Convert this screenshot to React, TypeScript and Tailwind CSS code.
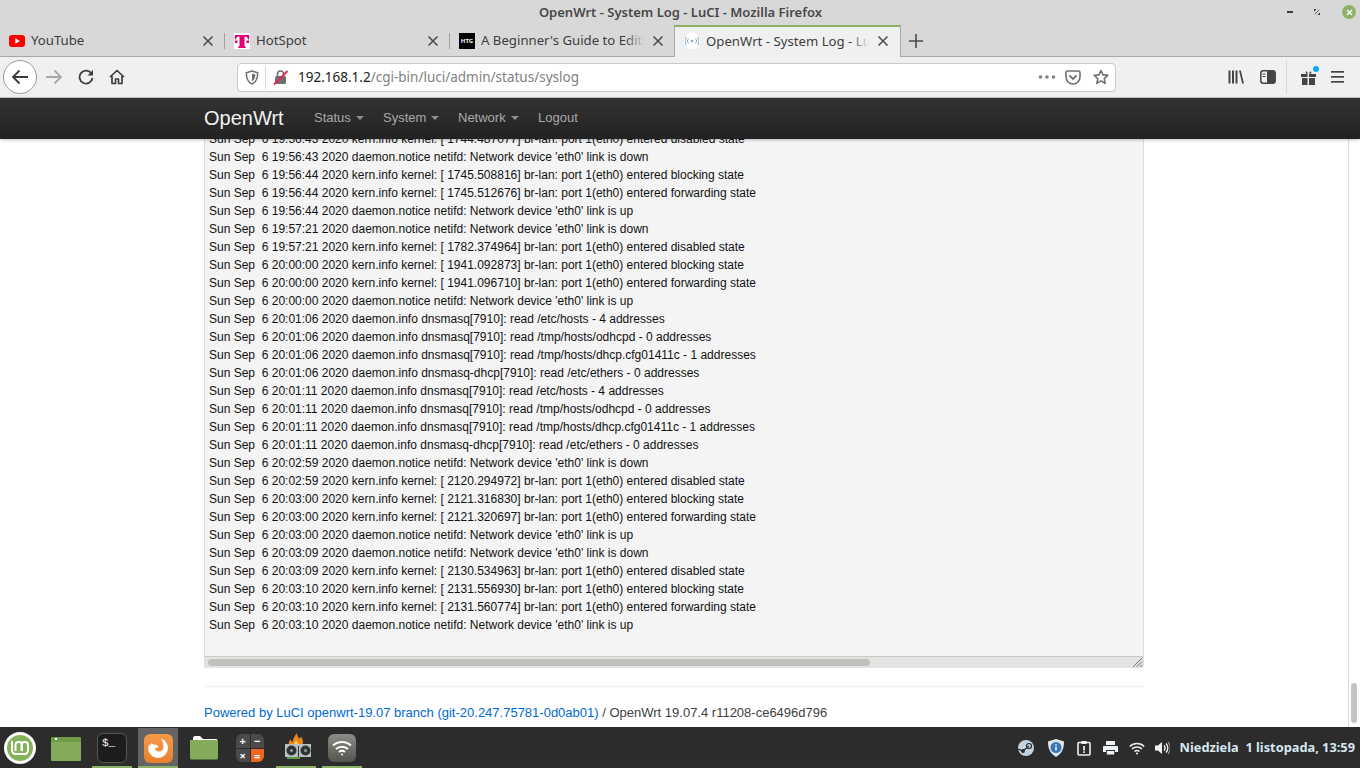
import React from "react";

const S = "Sun Sep  6 ";
const logs = [
  "19:56:43 2020 kern.info kernel: [ 1744.487077] br-lan: port 1(eth0) entered disabled state",
  "19:56:43 2020 daemon.notice netifd: Network device 'eth0' link is down",
  "19:56:44 2020 kern.info kernel: [ 1745.508816] br-lan: port 1(eth0) entered blocking state",
  "19:56:44 2020 kern.info kernel: [ 1745.512676] br-lan: port 1(eth0) entered forwarding state",
  "19:56:44 2020 daemon.notice netifd: Network device 'eth0' link is up",
  "19:57:21 2020 daemon.notice netifd: Network device 'eth0' link is down",
  "19:57:21 2020 kern.info kernel: [ 1782.374964] br-lan: port 1(eth0) entered disabled state",
  "20:00:00 2020 kern.info kernel: [ 1941.092873] br-lan: port 1(eth0) entered blocking state",
  "20:00:00 2020 kern.info kernel: [ 1941.096710] br-lan: port 1(eth0) entered forwarding state",
  "20:00:00 2020 daemon.notice netifd: Network device 'eth0' link is up",
  "20:01:06 2020 daemon.info dnsmasq[7910]: read /etc/hosts - 4 addresses",
  "20:01:06 2020 daemon.info dnsmasq[7910]: read /tmp/hosts/odhcpd - 0 addresses",
  "20:01:06 2020 daemon.info dnsmasq[7910]: read /tmp/hosts/dhcp.cfg01411c - 1 addresses",
  "20:01:06 2020 daemon.info dnsmasq-dhcp[7910]: read /etc/ethers - 0 addresses",
  "20:01:11 2020 daemon.info dnsmasq[7910]: read /etc/hosts - 4 addresses",
  "20:01:11 2020 daemon.info dnsmasq[7910]: read /tmp/hosts/odhcpd - 0 addresses",
  "20:01:11 2020 daemon.info dnsmasq[7910]: read /tmp/hosts/dhcp.cfg01411c - 1 addresses",
  "20:01:11 2020 daemon.info dnsmasq-dhcp[7910]: read /etc/ethers - 0 addresses",
  "20:02:59 2020 daemon.notice netifd: Network device 'eth0' link is down",
  "20:02:59 2020 kern.info kernel: [ 2120.294972] br-lan: port 1(eth0) entered disabled state",
  "20:03:00 2020 kern.info kernel: [ 2121.316830] br-lan: port 1(eth0) entered blocking state",
  "20:03:00 2020 kern.info kernel: [ 2121.320697] br-lan: port 1(eth0) entered forwarding state",
  "20:03:00 2020 daemon.notice netifd: Network device 'eth0' link is up",
  "20:03:09 2020 daemon.notice netifd: Network device 'eth0' link is down",
  "20:03:09 2020 kern.info kernel: [ 2130.534963] br-lan: port 1(eth0) entered disabled state",
  "20:03:10 2020 kern.info kernel: [ 2131.556930] br-lan: port 1(eth0) entered blocking state",
  "20:03:10 2020 kern.info kernel: [ 2131.560774] br-lan: port 1(eth0) entered forwarding state",
  "20:03:10 2020 daemon.notice netifd: Network device 'eth0' link is up",
];

function CloseX() {
  return (
    <svg width="12" height="12" viewBox="0 0 12 12" className="shrink-0">
      <path d="M1.500 1.500l9 9M10.500 1.500l-9 9" stroke="#4a4a4a" strokeWidth="1.500" fill="none" />
    </svg>
  );
}

function Tab({ icon, label, active }: { icon: React.ReactNode; label: string; active?: boolean }) {
  return (
    <div
      className={
        active
          ? "relative -mb-px -ml-px flex h-[32px] w-[227px] items-center border-x border-t-2 border-[#a8a8a8] border-t-[#8bb267] bg-[#f0f0f0] pb-[2px] pl-[9px] pr-[11px]"
          : "flex h-[31px] w-[225px] items-center pl-[9px] pr-[11px]"
      }
    >
      <div className="flex h-[16px] w-[16px] shrink-0 items-center justify-center">{icon}</div>
      <div className="relative ml-[6px] mr-[7px] mt-[1px] flex-1 overflow-hidden whitespace-nowrap text-[13.200px] text-[#3d3d3d]">
        {label}
        <div className={"absolute inset-y-0 right-0 w-[20px] bg-gradient-to-r from-transparent " + (active ? "to-[#f0f0f0]" : "to-[#d8d8d8]")} />
      </div>
      <CloseX />
    </div>
  );
}

const Sep = () => <div className="-ml-px h-[16px] w-px shrink-0 bg-[#a0a0a0]" />;

function Caret() {
  return <span className="ml-[5px] inline-block h-0 w-0 border-x-[4px] border-t-[4px] border-x-transparent border-t-[#8f8f8f] align-middle" />;
}

function NavItem({ label, caret, cls }: { label: string; caret?: boolean; cls: string }) {
  return (
    <div className={"text-[13px] text-[#a9a9a9] " + cls}>
      {label}
      {caret && <Caret />}
    </div>
  );
}

function Dock({ children, running, active }: { children: React.ReactNode; running?: boolean; active?: boolean }) {
  return (
    <div className={"relative flex h-[40px] w-[40px] items-center justify-center " + (active ? "bg-[#646464]" : "")}>
      {children}
      {running && <div className="absolute inset-x-0 bottom-0 h-[2px] bg-[#8bb267]" />}
    </div>
  );
}

export default function App() {
  return (
    <div className="flex h-[768px] w-[1360px] flex-col overflow-hidden bg-white font-['Noto_Sans',sans-serif]">
      {/* title bar + tabs */}
      <div className="flex h-[57px] shrink-0 flex-col border-b border-[#a8a8a8] bg-[#d8d8d8]">
        <div className="relative flex h-[25px] items-center justify-center text-[13px] font-semibold text-[#484848]">
          <span className="ml-[1px]">OpenWrt - System Log - LuCI - Mozilla Firefox</span>
          <div className="absolute right-[4px] top-[5px] flex items-center gap-[16px]">
            <div className="mr-[5px] h-[2px] w-[6px] bg-[#3a3a3a]" />
            <svg width="6" height="6" viewBox="0 0 8 8" className="mr-[6px]">
              <path d="M0 3.500V0h3.500zM8 4.500V8H4.500z" fill="#3a3a3a" />
              <path d="M1 7L7 1" stroke="#3a3a3a" strokeWidth="1" />
            </svg>
            <div className="flex h-[14px] w-[14px] items-center justify-center rounded-full bg-[#8fb26a]">
              <svg width="7" height="7" viewBox="0 0 7 7"><path d="M1 1l5 5M6 1l-5 5" stroke="#fff" strokeWidth="1.400" /></svg>
            </div>
          </div>
        </div>
        <div className="flex h-[31px] items-center">
          <Tab
            label="YouTube"
            icon={
              <svg width="16" height="12" viewBox="0 0 16 12">
                <rect width="16" height="12" rx="3" fill="#f00" />
                <path d="M6.300 3.300v5.400L11 6z" fill="#fff" />
              </svg>
            }
          />
          <Sep />
          <Tab
            label="HotSpot"
            icon={
              <svg width="16" height="16" viewBox="0 0 16 16">
                <rect width="16" height="16" fill="#fff" />
                <path d="M5.500 2h5v.8c0 0 0 0 0 0v10c0 .5.500.7 1.200.7V15H4.300v-1.500c.7 0 1.200-.2 1.200-.7z" fill="#e20074" />
                <path d="M0.800 2h14.400v4.500h-1.300c0-1.800-1-3-3.400-3H5.500c-2.400 0-3.400 1.200-3.400 3H.8z" fill="#e20074" />
                <rect x="1" y="7.500" width="2.500" height="2.500" fill="#e20074" />
                <rect x="12.500" y="7.500" width="2.500" height="2.500" fill="#e20074" />
              </svg>
            }
          />
          <Sep />
          <Tab
            label="A Beginner's Guide to Editing"
            icon={
              <div className="flex h-[16px] w-[16px] items-center justify-center bg-black text-[6px] font-bold leading-none text-white">HTG</div>
            }
          />
          <Tab
            active
            label="OpenWrt - System Log - LuCI"
            icon={
              <div className="flex h-[16px] w-[16px] items-center justify-center rounded-full bg-white">
                <svg width="14" height="10" viewBox="0 0 14 10" fill="none" stroke="#7da7c4" strokeWidth="1">
                  <path d="M3.500 2.500a3.500 3.500 0 0 0 0 5M1.500 1a6 6 0 0 0 0 8M10.500 2.500a3.500 3.500 0 0 1 0 5M12.500 1a6 6 0 0 1 0 8" />
                  <circle cx="7" cy="5" r="1.200" fill="#7da7c4" stroke="none" />
                </svg>
              </div>
            }
          />
          <svg width="16" height="16" viewBox="0 0 16 16" className="ml-[7px]">
            <path d="M8 1v14M1 8h14" stroke="#4a4a4a" strokeWidth="1.600" />
          </svg>
        </div>
      </div>

      {/* toolbar */}
      <div className="flex h-[41px] shrink-0 items-center border-b border-[#c8c8c8] bg-[#f0f0f0]">
        <div className="ml-[3px] flex h-[34px] w-[34px] items-center justify-center rounded-full border border-[#9a9a9a] bg-white">
          <svg width="18" height="16" viewBox="0 0 18 16" fill="none" stroke="#3c3c3c" strokeWidth="1.800">
            <path d="M17 8H2M8.500 1.500L2 8l6.500 6.500" />
          </svg>
        </div>
        <svg width="18" height="16" viewBox="0 0 18 16" fill="none" stroke="#a8a8a8" strokeWidth="1.800" className="ml-[8px]">
          <path d="M1 8h15M9.500 1.500L16 8l-6.500 6.500" />
        </svg>
        <svg width="16" height="16" viewBox="0 0 16 16" fill="none" className="ml-[15px]">
          <path d="M13.500 4.500A6.500 6.500 0 1 0 14.500 9" stroke="#3c3c3c" strokeWidth="1.800" />
          <path d="M15 1v5.500H9.500z" fill="#3c3c3c" />
        </svg>
        <svg width="16" height="16" viewBox="0 0 16 16" fill="none" className="ml-[15px]">
          <path d="M1 8l7-6.500L15 8M3 7v7.500h3.500V10h3v4.500H13V7" stroke="#3c3c3c" strokeWidth="1.700" strokeLinejoin="round" />
        </svg>
        <div className="ml-[112px] flex h-[29px] w-[879px] items-center rounded-[4px] border border-[#c8c8c8] bg-white">
          <svg width="14" height="15" viewBox="0 0 14 15" className="ml-[7px]" fill="none">
            <path d="M7 1l5.700 1.700c0 6-1.500 9.500-5.700 11.300C2.800 12.200 1.300 8.700 1.300 2.700z" stroke="#707070" strokeWidth="1.500" />
            <path d="M7 3.500l3.300 1c0 3.500-1 5.500-3.300 6.700z" fill="#707070" />
          </svg>
          <div className="ml-[6px] h-[24px] w-px bg-[#d8d8d8]" />
          <svg width="16" height="16" viewBox="0 0 16 16" className="ml-[7px]" fill="none">
            <rect x="2" y="7" width="11" height="8" rx="1.500" fill="#6e6e6e" />
            <path d="M4.500 7V5a3 3 0 0 1 6 0v2" stroke="#6e6e6e" strokeWidth="1.500" />
            <path d="M1 15.500L14.500 2" stroke="#e22850" strokeWidth="2" />
          </svg>
          <div className="ml-[9px] flex-1 whitespace-nowrap text-[13.500px] text-[#1c1c1c]">
            192.168.1.2<span className="text-[#808080]">/cgi-bin/luci/admin/status/syslog</span>
          </div>
          <svg width="18" height="4" viewBox="0 0 18 4" fill="#808080"><circle cx="2.500" cy="2" r="1.800" /><circle cx="9" cy="2" r="1.800" /><circle cx="15.500" cy="2" r="1.800" /></svg>
          <svg width="16" height="15" viewBox="0 0 16 15" fill="none" className="ml-[9px]">
            <path d="M2.500 1h11A1.500 1.500 0 0 1 15 2.500V7a7 7 0 0 1-14 0V2.500A1.500 1.500 0 0 1 2.500 1z" stroke="#707070" strokeWidth="1.600" />
            <path d="M4.500 5.500L8 9l3.500-3.500" stroke="#707070" strokeWidth="1.800" />
          </svg>
          <svg width="16" height="16" viewBox="0 0 16 16" fill="none" className="ml-[12px] mr-[6px]">
            <path d="M8 1.500l2 4.400 4.800.5-3.600 3.200 1 4.700L8 11.900l-4.200 2.400 1-4.700L1.200 6.400 6 5.900z" stroke="#707070" strokeWidth="1.600" strokeLinejoin="round" />
          </svg>
        </div>
        <svg width="16" height="14" viewBox="0 0 16 14" className="ml-[112px]" fill="#444">
          <rect x="0.500" y="0.500" width="2" height="13" /><rect x="4" y="0.500" width="2" height="13" /><rect x="7.500" y="0.500" width="2" height="13" />
          <path d="M11 0.500h1.800L16 13.500h-1.800z" />
        </svg>
        <svg width="16" height="14" viewBox="0 0 16 14" className="ml-[16px]" fill="none">
          <rect x="0.800" y="0.800" width="14.400" height="12.400" rx="2.500" stroke="#444" strokeWidth="1.500" />
          <rect x="7" y="1" width="8" height="12" rx="1" fill="#444" />
          <path d="M2.500 4h3M2.500 6.500h3" stroke="#444" />
        </svg>
        <div className="ml-[10px] h-[34px] w-px bg-[#d8d8d8]" />
        <div className="relative ml-[14px] h-[16px] w-[15px]">
          <svg width="15" height="14" viewBox="0 0 15 14" className="absolute left-0 top-[2px]" fill="#444">
            <path d="M0 3h6.500v3H0zM8 3h7v3H8zM1 7h5.500v7H1zM8 7h6v7H8zM5 0l2.500 2.500L10 0l.5 2.500h-6z" />
          </svg>
          <div className="absolute -right-[3px] -top-[3px] h-[6px] w-[6px] rounded-full bg-[#12a6f5]" />
        </div>
        <svg width="13" height="12" viewBox="0 0 13 12" className="ml-[15px]" fill="#444">
          <rect y="0" width="13" height="1.700" /><rect y="5" width="13" height="1.700" /><rect y="10" width="13" height="1.700" />
        </svg>
      </div>

      {/* navbar */}
      <div className="relative z-10 flex h-[41px] shrink-0 bg-gradient-to-b from-[#333333] to-[#222222] font-['Liberation_Sans',sans-serif] shadow-[0_1px_3px_rgba(0,0,0,0.25)]">
        <div className="flex w-[1348px] justify-center">
          <div className="flex w-[940px] items-center pb-[2px]">
            <div className="w-[110px] text-[20px] leading-[24px] text-[#f2f2f2]">OpenWrt</div>
            <NavItem label="Status" caret cls="w-[69px]" />
            <NavItem label="System" caret cls="w-[75px]" />
            <NavItem label="Network" caret cls="w-[80px]" />
            <NavItem label="Logout" cls="" />
          </div>
        </div>
      </div>

      {/* page */}
      <div className="flex min-h-0 flex-1 overflow-hidden font-['Liberation_Sans',sans-serif]">
        <div className="flex min-w-0 flex-1 justify-center">
          <div className="flex w-[940px] flex-col">
            <div className="-mt-[9px] flex h-[538px] shrink-0 flex-col rounded-b-[3px] border-x border-[#dcdcdc] bg-[#f4f4f4]">
              <div className="flex-1 pl-[4px] text-[12px] leading-[18px] text-[#111]">
                {logs.map((l, i) => (
                  <div key={i} className="whitespace-pre">{S + l}</div>
                ))}
              </div>
              <div className="relative flex h-[12px] shrink-0 items-center border-t border-[#c8c8c8] bg-[#e3e3e1] pl-[3px]">
                <div className="h-[7px] w-[662px] rounded-full bg-[#c0c0bd]" />
                <svg width="12" height="12" viewBox="0 0 12 12" className="absolute bottom-0 right-0" stroke="#777" strokeWidth="1">
                  <path d="M11 2L2 11M11 5.500L5.500 11M11 9l-2 2" />
                </svg>
              </div>
            </div>
            <div className="mt-[18px] border-t border-[#eeeeee] pt-[17px] text-[13px] leading-[18px] text-[#404040]">
              <span className="text-[#0069d6]">Powered by LuCI openwrt-19.07 branch (git-20.247.75781-0d0ab01)</span> / OpenWrt 19.07.4 r11208-ce6496d796
            </div>
          </div>
        </div>
        <div className="flex w-[12px] shrink-0 flex-col justify-end border-l border-[#dddddd] bg-white pb-[4px]">
          <div className="ml-[2px] h-[40px] w-[6px] rounded-full bg-[#c4c4c4]" />
        </div>
      </div>

      {/* taskbar */}
      <div className="flex h-[41px] shrink-0 items-end gap-[6px] bg-[#2c2c2c]">
        <div className="flex h-[40px] w-[40px] items-center justify-center">
          <svg width="32" height="32" viewBox="0 0 32 32" fill="none">
            <circle cx="16" cy="16" r="16" fill="#fff" />
            <circle cx="16" cy="16" r="13" fill="#86b25b" />
            <path d="M8 9v9.500a3.500 3.500 0 0 0 3.500 3.500h9a3.500 3.500 0 0 0 3.500-3.500V13a3 3 0 0 0-3-3h-.5a3 3 0 0 0-3 3v6M18 19v-6a3 3 0 0 0-3-3h-.5a3 3 0 0 0-3 3v6" stroke="#fff" strokeWidth="2" />
          </svg>
        </div>
        <Dock>
          <div className="relative mt-[2px] h-[24px] w-[30px] rounded-[1px] border-t-[5px] border-[#6f9a4a] bg-[#84ab5c]">
            <div className="absolute -top-[4px] left-[4px] h-[2px] w-[2px] bg-white" />
          </div>
        </Dock>
        <Dock running>
          <div className="h-[30px] w-[30px] rounded-[6px] border border-[#555] bg-[#1c1c1c] pl-[4px] pt-[2px] font-['Liberation_Mono',monospace] text-[11px] leading-[14px] text-white">$_</div>
        </Dock>
        <Dock running active>
          <div className="flex h-[29px] w-[29px] items-center justify-center rounded-[6px] bg-gradient-to-b from-[#f59a48] to-[#e87f2c]">
            <svg width="24" height="24" viewBox="0 0 24 24">
              <path d="M15 2.500c4 1.500 7 5 7 9.500a10 10 0 0 1-19.500 3c-.5-2.500 0-5 1-7l.5 2 1.500-3c.5 1 1.500 1.500 3 1.500 2 0 3.500 1 4 2.500-1 1-2.500 1-3.500 1 0 2 1.500 3.500 4 3.500 2.500 0 4.500-2 4.500-4.500 0-3.500-1-6-2.500-8z" fill="#fff" />
            </svg>
          </div>
        </Dock>
        <Dock>
          <svg width="30" height="26" viewBox="0 0 30 26">
            <path d="M4 3c0-1 1-2 2-2h5l3 3h14v2H4z" fill="#fff" />
            <path d="M1 5h28v18a1.500 1.500 0 0 1-1.500 1.500h-25A1.500 1.500 0 0 1 1 23z" fill="#84ab5c" />
          </svg>
        </Dock>
        <Dock>
          <div className="grid h-[28px] w-[28px] grid-cols-2 grid-rows-2 gap-px overflow-hidden rounded-[6px] bg-[#2c2c2c] text-[11px] font-bold leading-none text-white">
            <div className="flex items-center justify-center bg-[#4a4a4a]">+</div>
            <div className="flex items-center justify-center bg-[#4a4a4a]">−</div>
            <div className="flex items-center justify-center bg-[#4a4a4a]">×</div>
            <div className="flex items-center justify-center bg-[#f0661e]">=</div>
          </div>
        </Dock>
        <Dock running>
          <svg width="30" height="30" viewBox="0 0 30 30" className="-mt-[2px]">
            <path d="M8 14c-1-3 0-5 2-7 0 2 .5 3 1.500 3 .5-3 2-6 4.500-9 0 3 1.500 4 2.500 6 .5-1 1-1.500 1.500-2.500 2 3 2.500 6 1.500 9.500z" fill="#e8861c" />
            <path d="M12 14c0-2 2-3 3-6 1 2 3 3 3 6z" fill="#f7c948" />
            <rect x="4" y="12" width="13" height="13" fill="#b6bfc2" /><rect x="18" y="12" width="13" height="13" fill="#b6bfc2" />
            <circle cx="10.500" cy="18.500" r="5" fill="#2f3436" /><circle cx="24.500" cy="18.500" r="5" fill="#2f3436" />
            <circle cx="10.500" cy="18.500" r="1.500" fill="#999" /><circle cx="24.500" cy="18.500" r="1.500" fill="#999" />
            <rect x="6" y="25" width="13" height="2" fill="#5d9a45" />
          </svg>
        </Dock>
        <Dock running>
          <div className="flex h-[28px] w-[28px] items-center justify-center rounded-[6px] bg-gradient-to-b from-[#8c8c88] to-[#55554f]">
            <svg width="20" height="16" viewBox="0 0 20 16" fill="none" stroke="#fff" strokeWidth="2">
              <path d="M1 5.500a13 13 0 0 1 18 0M4 9a9 9 0 0 1 12 0M7 12a4.500 4.500 0 0 1 6 0" />
              <circle cx="10" cy="14.500" r="1" fill="#fff" stroke="none" />
            </svg>
          </div>
        </Dock>

        <div className="flex-1" />
        <div className="flex h-[40px] items-center">
          <svg width="16" height="16" viewBox="0 0 16 16">
            <circle cx="8" cy="8" r="8" fill="#c3d2dc" />
            <circle cx="11" cy="6" r="2.500" fill="none" stroke="#2c2c2c" strokeWidth="1.200" />
            <circle cx="5" cy="11" r="2" fill="#2c2c2c" />
            <path d="M0 9l5 2 6-5" stroke="#2c2c2c" strokeWidth="1.200" fill="none" />
          </svg>
          <svg width="20" height="20" viewBox="0 0 20 20" className="ml-[12px]">
            <path d="M10 1l8 2.500c0 7-2 12-8 15.500C4 15.500 2 10.500 2 3.500z" fill="#dfe8ee" />
            <circle cx="10" cy="9.500" r="5.500" fill="#3a76b8" />
            <rect x="9.300" y="8.500" width="1.400" height="4" fill="#fff" /><rect x="9.300" y="6.200" width="1.400" height="1.400" fill="#fff" />
          </svg>
          <svg width="14" height="16" viewBox="0 0 14 16" className="ml-[11px]" fill="none">
            <rect x="1" y="2.500" width="12" height="12.500" rx="1" stroke="#eef2f4" strokeWidth="1.600" />
            <rect x="4.500" y="1" width="5" height="3" fill="#eef2f4" />
            <rect x="6.200" y="6" width="1.700" height="4.500" fill="#eef2f4" /><rect x="6.200" y="11.300" width="1.700" height="1.700" fill="#eef2f4" />
          </svg>
          <svg width="15" height="14" viewBox="0 0 15 14" className="ml-[12px]" fill="#eef2f4">
            <rect x="3" y="0" width="9" height="4" />
            <path d="M1 5h13a1 1 0 0 1 1 1v5h-3V9H3v2H0V6a1 1 0 0 1 1-1z" />
            <rect x="3.800" y="10" width="7.400" height="3.500" />
          </svg>
          <svg width="16" height="13" viewBox="0 0 16 13" className="ml-[11px]" fill="none" stroke="#eef2f4" strokeWidth="1.500">
            <path d="M.8 4.500a10 10 0 0 1 14.400 0M3 7a7 7 0 0 1 10 0M5.500 9.500a3.500 3.500 0 0 1 5 0" />
            <circle cx="8" cy="11.500" r="1" fill="#eef2f4" stroke="none" />
          </svg>
          <svg width="15" height="14" viewBox="0 0 15 14" className="ml-[10px]" fill="none">
            <path d="M0 4.500h3L7 1v12L3 9.500H0z" fill="#eef2f4" />
            <path d="M9 4.500a3.500 3.500 0 0 1 0 5M11 2.500a6.500 6.500 0 0 1 0 9" stroke="#eef2f4" strokeWidth="1.400" />
            <path d="M13 1a9 9 0 0 1 0 12" stroke="#8a8a8a" strokeWidth="1.200" />
          </svg>
          <div className="ml-[10px] mr-[5px] whitespace-pre font-['Noto_Sans',sans-serif] text-[12.800px] font-bold text-[#d5e6f1]">Niedziela  1 listopada, 13:59</div>
        </div>
      </div>
    </div>
  );
}
